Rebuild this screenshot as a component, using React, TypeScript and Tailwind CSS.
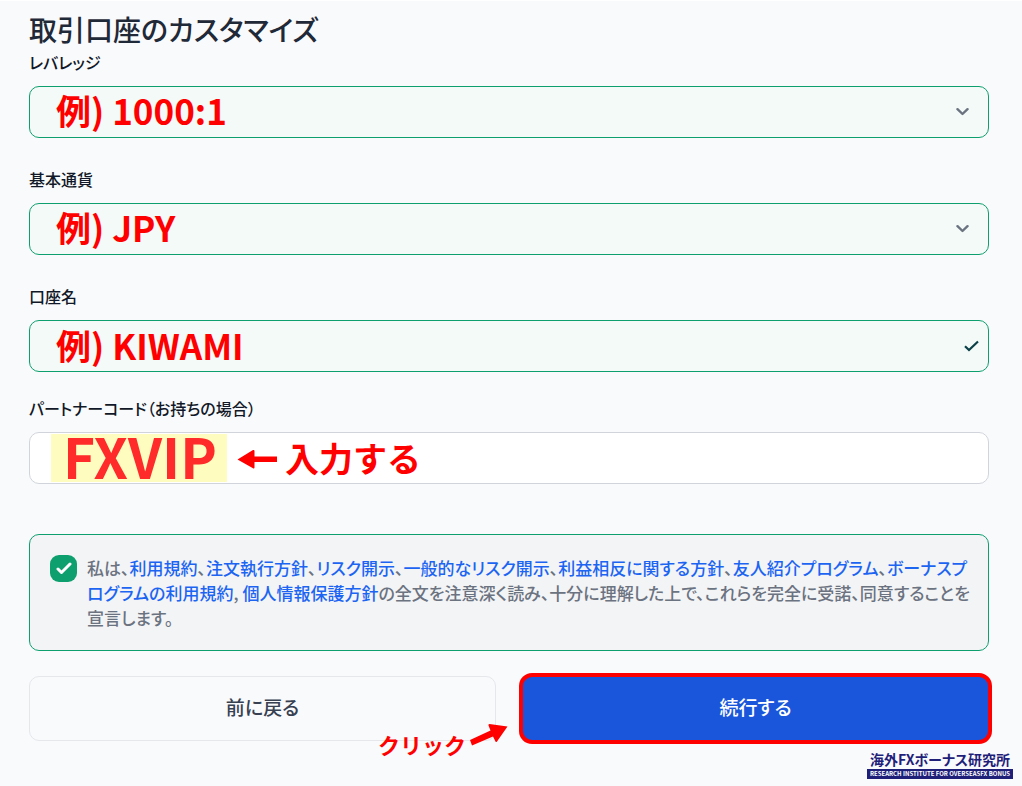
import type { FC, ReactNode } from 'react';

interface SelectFieldProps {
  id: string;
  label: string;
  value: string;
  className: string;
}

interface TermI {
  label: string;
  separator: string;
}

const terms: TermI[] = [
  { label: '利用規約', separator: '、' },
  { label: '注文執行方針', separator: '、' },
  { label: 'リスク開示', separator: '、' },
  { label: '一般的なリスク開示', separator: '、' },
  { label: '利益相反に関する方針', separator: '、' },
  { label: '友人紹介プログラム', separator: '、' },
  { label: 'ボーナスプログラムの利用規約', separator: ', ' },
  { label: '個人情報保護方針', separator: '' },
];

const FieldLabel: FC<{ htmlFor: string; children: ReactNode }> = ({ htmlFor, children }) => (
  <label htmlFor={htmlFor} className="block text-base leading-6 font-medium text-[#111827]">
    {children}
  </label>
);

const SelectField: FC<SelectFieldProps> = (props) => {
  const { id, label, value, className } = props;

  return (
    <div className={className}>
      <FieldLabel htmlFor={id}>{label}</FieldLabel>
      <div className="relative mt-3">
        <select
          id={id}
          defaultValue={value}
          className="block h-13 w-full appearance-none rounded-[10px] border border-[#0e9f6e] bg-[#f3faf7] px-6.5 pb-1 text-[35px] leading-11 font-bold text-[#ff0000]"
        >
          <option value={value}>{value}</option>
        </select>
        <svg
          className="pointer-events-none absolute top-5 right-5 h-3 w-3.5"
          viewBox="0 0 14 12"
          fill="none"
          stroke="#6b7280"
          strokeWidth="2.4"
          strokeLinecap="round"
          strokeLinejoin="round"
        >
          <path d="M2.500 3.200 7.500 8 12.500 3.200" />
        </svg>
      </div>
    </div>
  );
};

export default function App() {
  return (
    <main
      lang="ja"
      className="min-h-screen border-t border-white bg-[#f9fafc] pt-2 pr-[33px] pl-[29px] font-['Noto_Sans_CJK_JP',sans-serif] [font-feature-settings:'palt']"
    >
      <form onSubmit={(e) => e.preventDefault()}>
        <h1 className="text-[28px] leading-10 font-medium text-[#1f2937]">
          取引口座のカスタマイズ
        </h1>

        <SelectField id="leverage" label="レバレッジ" value="例) 1000:1" className="mt-px" />
        <SelectField id="currency" label="基本通貨" value="例) JPY" className="mt-[29px]" />

        <div className="mt-[29px]">
          <FieldLabel htmlFor="account">口座名</FieldLabel>
          <div className="relative mt-3">
            <input
              id="account"
              type="text"
              defaultValue="例) KIWAMI"
              className="block h-13 w-full rounded-[10px] border border-[#0e9f6e] bg-[#f3faf7] px-6.5 pb-1 text-[35px] leading-11 font-bold text-[#ff0000]"
            />
            <svg
              className="pointer-events-none absolute top-5 right-2.5 h-3 w-4"
              viewBox="0 0 16 12"
              fill="none"
              stroke="#0b4048"
              strokeWidth="2.2"
            >
              <path d="M2 6.200 6 10 15 1.500" />
            </svg>
          </div>
        </div>

        <div className="mt-6">
          <FieldLabel htmlFor="partner">パートナーコード（お持ちの場合）</FieldLabel>
          <div className="mt-3 flex h-13 items-center overflow-hidden rounded-[10px] border border-[#d1d5db] bg-white pl-[21px]">
            <input
              id="partner"
              type="text"
              defaultValue="FXVIP"
              className="h-12 w-44 bg-[#fffcbf] pb-1.5 pl-3 text-[55px] leading-10 font-bold text-[#ff2a2a]"
            />
            <svg className="mt-0.5 ml-2.5 h-5 w-10 shrink-0" viewBox="0 0 40 20" fill="#ff0000">
              <path d="M.5 10.500 16 1Q17.500 .500 17.500 2V7.500H40V13H17.500V18.500Q17.500 20 16 19.300Z" />
            </svg>
            <span className="ml-2 text-[34px] leading-12 font-bold whitespace-nowrap text-[#ff0000] [font-feature-settings:normal]">
              入力する
            </span>
          </div>
        </div>

        <div className="mt-[50px] flex gap-2.5 rounded-[10px] border border-[#0e9f6e] bg-[#f3f4f6] py-5 pr-3.5 pl-5">
          <div className="relative size-[27px] shrink-0">
            <input
              id="agree"
              type="checkbox"
              defaultChecked
              className="block size-[27px] appearance-none rounded-[9px] bg-[#0e9f6e]"
            />
            <svg
              className="pointer-events-none absolute top-1.5 left-1.5 h-3.5 w-4"
              viewBox="0 0 16 14"
              fill="none"
              stroke="#fff"
              strokeWidth="3"
              strokeLinecap="round"
              strokeLinejoin="round"
            >
              <path d="M2 8 5.500 11.500 14 3" />
            </svg>
          </div>
          <label
            htmlFor="agree"
            className="text-[17px] leading-[25px] font-medium break-all text-[#6b7280]"
          >
            私は、
            {terms.map((term) => (
              <span key={term.label}>
                <a href="#terms" className="text-[#1c64f2]">
                  {term.label}
                </a>
                {term.separator}
              </span>
            ))}
            の全文を注意深く読み、十分に理解した上で、これらを完全に受諾、同意することを宣言します。
          </label>
        </div>

        <div className="mt-[25px] grid grid-cols-2 gap-[26px] text-[19px] leading-6 font-medium">
          <div className="relative">
            <button
              type="button"
              className="h-[65px] w-full rounded-[10px] border border-[#e5e7eb] pb-1 text-[#374151]"
            >
              前に戻る
            </button>
            <div className="absolute top-12 -right-3 flex items-start">
              <span className="mt-1 text-[22px] leading-8 font-bold text-[#ff0000] [font-feature-settings:normal]">
                クリック
              </span>
              <svg className="ml-1 h-[22px] w-[38px]" viewBox="0 0 38 22" fill="#ff0000">
                <path d="M37.500 2.500 19.500 0Q18 0 18.500 1.500L20.500 6.500 0 16 2 21.500 23 12.500 25.500 17.500Q26 18.500 27 17.500Z" />
              </svg>
            </div>
          </div>
          <button
            type="submit"
            className="h-[65px] rounded-[10px] bg-[#1a56db] pb-1 text-white outline-4 -outline-offset-1 outline-[#ff0000]"
          >
            続行する
          </button>
        </div>
      </form>

      <footer className="mt-2 -mr-6 flex justify-end font-bold text-[#1f1f7a]">
        <div className="w-[146px] text-center whitespace-nowrap">
          <p className="text-sm leading-5">海外FXボーナス研究所</p>
          <p className="bg-[#1f1f7a] text-[6px] leading-[10px] text-white">
            RESEARCH INSTITUTE FOR OVERSEASFX BONUS
          </p>
        </div>
      </footer>
    </main>
  );
}
